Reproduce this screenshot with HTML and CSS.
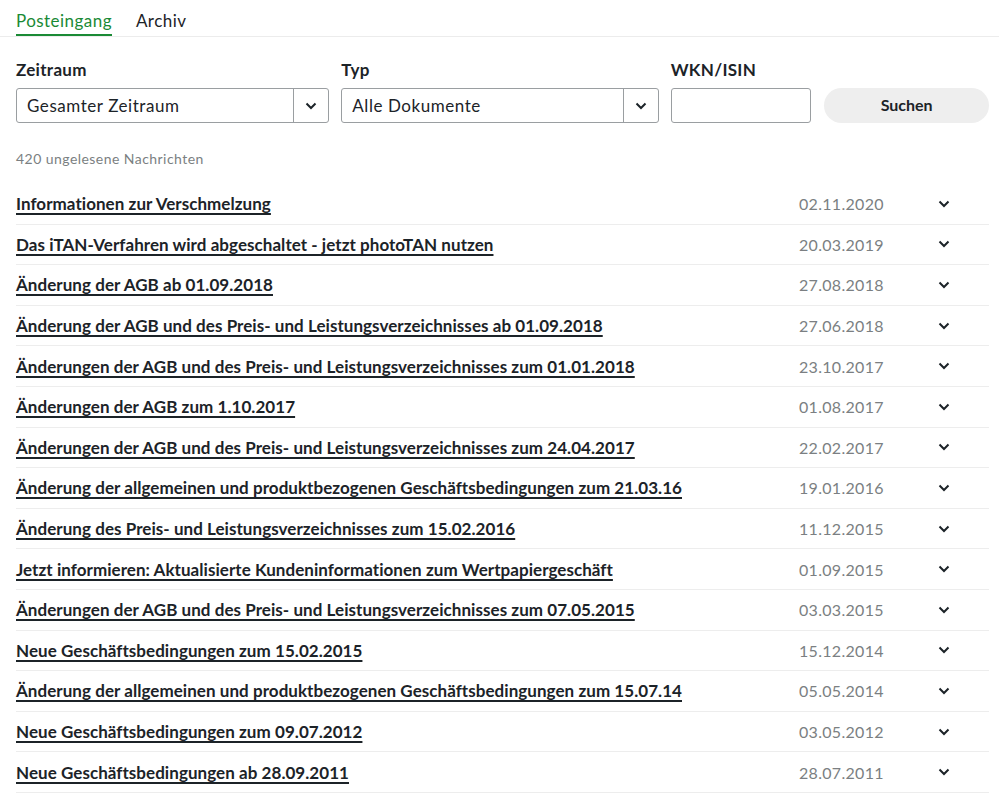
FILE: index.html
```html
<!DOCTYPE html>
<html lang="de">
<head>
<meta charset="utf-8">
<link rel="stylesheet" href="styles.css">
</head>
<body>
<nav class="tabs">
  <a class="tab tab-active">Posteingang</a>
  <a class="tab">Archiv</a>
</nav>
<main class="content">
  <form class="filters">
    <div class="field field-zeitraum">
      <label class="label">Zeitraum</label>
      <div class="select">
        <span class="select-value">Gesamter Zeitraum</span>
        <span class="select-btn"><svg width="12" height="8" viewBox="0 0 12 8"><path d="M1.5 1.5 6 6l4.5-4.5" fill="none" stroke="#1c2328" stroke-width="2"/></svg></span>
      </div>
    </div>
    <div class="field field-typ">
      <label class="label">Typ</label>
      <div class="select">
        <span class="select-value">Alle Dokumente</span>
        <span class="select-btn"><svg width="12" height="8" viewBox="0 0 12 8"><path d="M1.5 1.5 6 6l4.5-4.5" fill="none" stroke="#1c2328" stroke-width="2"/></svg></span>
      </div>
    </div>
    <div class="field field-wkn">
      <label class="label">WKN/ISIN</label>
      <div class="input"></div>
    </div>
    <button type="button" class="btn">Suchen</button>
  </form>
  <p class="count">420 ungelesene Nachrichten</p>
  <ul class="list">
    <li class="row"><a class="title">Informationen zur Verschmelzung</a><span class="date">02.11.2020</span><span class="chev"><svg width="12" height="8" viewBox="0 0 12 8"><path d="M1.5 1.5 6 6l4.5-4.5" fill="none" stroke="#1c2328" stroke-width="2"/></svg></span></li>
    <li class="row"><a class="title">Das iTAN-Verfahren wird abgeschaltet - jetzt photoTAN nutzen</a><span class="date">20.03.2019</span><span class="chev"><svg width="12" height="8" viewBox="0 0 12 8"><path d="M1.5 1.5 6 6l4.5-4.5" fill="none" stroke="#1c2328" stroke-width="2"/></svg></span></li>
    <li class="row"><a class="title">Änderung der AGB ab 01.09.2018</a><span class="date">27.08.2018</span><span class="chev"><svg width="12" height="8" viewBox="0 0 12 8"><path d="M1.5 1.5 6 6l4.5-4.5" fill="none" stroke="#1c2328" stroke-width="2"/></svg></span></li>
    <li class="row"><a class="title">Änderung der AGB und des Preis- und Leistungsverzeichnisses ab 01.09.2018</a><span class="date">27.06.2018</span><span class="chev"><svg width="12" height="8" viewBox="0 0 12 8"><path d="M1.5 1.5 6 6l4.5-4.5" fill="none" stroke="#1c2328" stroke-width="2"/></svg></span></li>
    <li class="row"><a class="title">Änderungen der AGB und des Preis- und Leistungsverzeichnisses zum 01.01.2018</a><span class="date">23.10.2017</span><span class="chev"><svg width="12" height="8" viewBox="0 0 12 8"><path d="M1.5 1.5 6 6l4.5-4.5" fill="none" stroke="#1c2328" stroke-width="2"/></svg></span></li>
    <li class="row"><a class="title">Änderungen der AGB zum 1.10.2017</a><span class="date">01.08.2017</span><span class="chev"><svg width="12" height="8" viewBox="0 0 12 8"><path d="M1.5 1.5 6 6l4.5-4.5" fill="none" stroke="#1c2328" stroke-width="2"/></svg></span></li>
    <li class="row"><a class="title">Änderungen der AGB und des Preis- und Leistungsverzeichnisses zum 24.04.2017</a><span class="date">22.02.2017</span><span class="chev"><svg width="12" height="8" viewBox="0 0 12 8"><path d="M1.5 1.5 6 6l4.5-4.5" fill="none" stroke="#1c2328" stroke-width="2"/></svg></span></li>
    <li class="row"><a class="title">Änderung der allgemeinen und produktbezogenen Geschäftsbedingungen zum 21.03.16</a><span class="date">19.01.2016</span><span class="chev"><svg width="12" height="8" viewBox="0 0 12 8"><path d="M1.5 1.5 6 6l4.5-4.5" fill="none" stroke="#1c2328" stroke-width="2"/></svg></span></li>
    <li class="row"><a class="title">Änderung des Preis- und Leistungsverzeichnisses zum 15.02.2016</a><span class="date">11.12.2015</span><span class="chev"><svg width="12" height="8" viewBox="0 0 12 8"><path d="M1.5 1.5 6 6l4.5-4.5" fill="none" stroke="#1c2328" stroke-width="2"/></svg></span></li>
    <li class="row"><a class="title">Jetzt informieren: Aktualisierte Kundeninformationen zum Wertpapiergeschäft</a><span class="date">01.09.2015</span><span class="chev"><svg width="12" height="8" viewBox="0 0 12 8"><path d="M1.5 1.5 6 6l4.5-4.5" fill="none" stroke="#1c2328" stroke-width="2"/></svg></span></li>
    <li class="row"><a class="title">Änderungen der AGB und des Preis- und Leistungsverzeichnisses zum 07.05.2015</a><span class="date">03.03.2015</span><span class="chev"><svg width="12" height="8" viewBox="0 0 12 8"><path d="M1.5 1.5 6 6l4.5-4.5" fill="none" stroke="#1c2328" stroke-width="2"/></svg></span></li>
    <li class="row"><a class="title">Neue Geschäftsbedingungen zum 15.02.2015</a><span class="date">15.12.2014</span><span class="chev"><svg width="12" height="8" viewBox="0 0 12 8"><path d="M1.5 1.5 6 6l4.5-4.5" fill="none" stroke="#1c2328" stroke-width="2"/></svg></span></li>
    <li class="row"><a class="title">Änderung der allgemeinen und produktbezogenen Geschäftsbedingungen zum 15.07.14</a><span class="date">05.05.2014</span><span class="chev"><svg width="12" height="8" viewBox="0 0 12 8"><path d="M1.5 1.5 6 6l4.5-4.5" fill="none" stroke="#1c2328" stroke-width="2"/></svg></span></li>
    <li class="row"><a class="title">Neue Geschäftsbedingungen zum 09.07.2012</a><span class="date">03.05.2012</span><span class="chev"><svg width="12" height="8" viewBox="0 0 12 8"><path d="M1.5 1.5 6 6l4.5-4.5" fill="none" stroke="#1c2328" stroke-width="2"/></svg></span></li>
    <li class="row"><a class="title">Neue Geschäftsbedingungen ab 28.09.2011</a><span class="date">28.07.2011</span><span class="chev"><svg width="12" height="8" viewBox="0 0 12 8"><path d="M1.5 1.5 6 6l4.5-4.5" fill="none" stroke="#1c2328" stroke-width="2"/></svg></span></li>
  </ul>
</main>
</body>
</html>
```
FILE: styles.css
```css
* { box-sizing: border-box; }
html, body { margin: 0; padding: 0; background: #fff; }
body {
  font-family: Lato, "Noto Sans", sans-serif;
  color: #1c2328;
  font-size: 16px;
}
.tabs {
  display: flex;
  gap: 24px;
  padding: 0 16px;
  border-bottom: 1px solid #ececec;
  height: 37px;
}
.tab {
  font-size: 17px;
  letter-spacing: 0.45px;
  line-height: 20px;
  padding-top: 11px;
  height: 36px;
  color: #1c2328;
}
.tab-active {
  color: #1a8a35;
  border-bottom: 2px solid #1a8a35;
}
.content { padding: 0 10px 0 16px; }
.filters {
  display: flex;
  align-items: flex-end;
  gap: 12px;
  margin-top: 23px;
}
.field { display: flex; flex-direction: column; }
.field-zeitraum { width: 314px; }
.field-typ { width: 318px; }
.field-wkn { width: 141px; }
.label {
  font-weight: 700;
  font-size: 17px;
  letter-spacing: 0.3px;
  line-height: 20px;
  margin-bottom: 8px;
}
.select {
  display: flex;
  height: 35px;
  border: 1px solid #9a9ea1;
  border-radius: 3px;
}
.select-value {
  flex: 1;
  padding-left: 10px;
  line-height: 33px;
  font-size: 17px;
  letter-spacing: 0.55px;
}
.select-btn {
  width: 35px;
  border-left: 1px solid #9a9ea1;
  display: flex;
  align-items: center;
  justify-content: center;
}
.input {
  height: 35px;
  border: 1px solid #9a9ea1;
  border-radius: 3px;
}
.btn {
  width: 165px;
  height: 35px;
  border: 0;
  border-radius: 18px;
  background: #eeeeee;
  font-family: inherit;
  font-weight: 700;
  font-size: 16px;
  color: #1c2328;
  margin-left: 1px;
  padding-bottom: 4px;
}
.count {
  margin: 28px 0 17px;
  font-size: 14px;
  letter-spacing: 0.45px;
  line-height: 16px;
  color: #7b7f82;
}
.list { list-style: none; margin: 0; padding: 0; }
.row {
  display: grid;
  grid-template-columns: 1fr 133px 24px;
  align-items: center;
  height: 40.6px;
  padding-right: 33px;
  border-bottom: 1px solid #ededed;
}
.title {
  font-weight: 700;
  font-size: 17px;
  letter-spacing: 0.05px;
  text-decoration: underline;
  text-decoration-thickness: 1.5px;
  text-underline-offset: 3px;
  color: #1c2328;
}
.date { color: #7b7f82; font-size: 16px; letter-spacing: 0.3px; }
.chev { display: flex; justify-content: center; }
```
